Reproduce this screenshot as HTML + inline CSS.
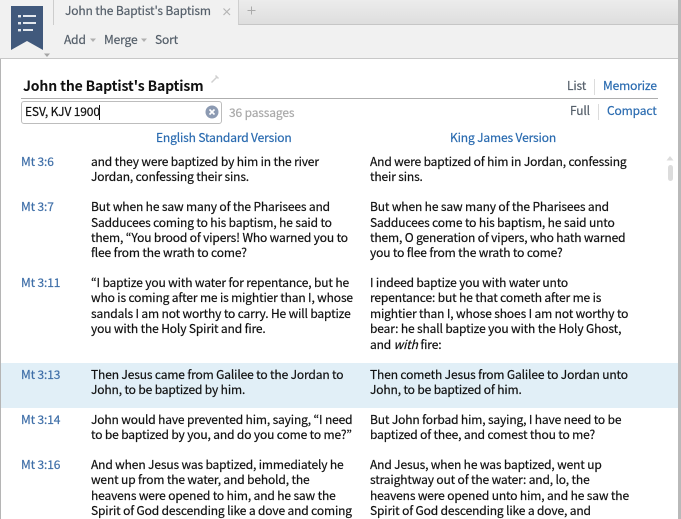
<!DOCTYPE html>
<html><head><meta charset="utf-8">
<style>
html,body{margin:0;padding:0;width:681px;height:519px;overflow:hidden;background:#fff}
body{position:relative;font-family:"Noto Sans CJK JP","Liberation Sans",sans-serif;font-size:12px;letter-spacing:-.14px;color:#111;-webkit-text-stroke:.2px}
.a{position:absolute;white-space:nowrap;line-height:16px}
.r{color:#3f6fa8;left:21px}
.b{color:#2a6bb0}
.g{color:#555f6a}
</style></head>
<body>
<!-- toolbar -->
<div style="position:absolute;left:0;top:0;width:681px;height:58px;background:#f1f1f1;border-bottom:1px solid #c8c8c8"></div>
<div style="position:absolute;left:238px;top:0;width:443px;height:24px;background:linear-gradient(#ececec,#dedede);border-bottom:1px solid #c6c6c6;border-left:1px solid #cfcfcf"></div>
<div style="position:absolute;left:53px;top:0;width:1px;height:25px;background:#cdcdcd"></div>
<svg style="position:absolute;left:0;top:0" width="60" height="60">
<path d="M11 6H43V50L27 41L11 50Z" fill="#41597c"/>
<g fill="#e4e8ee"><rect x="18" y="15" width="3" height="2.4"/><rect x="23" y="15" width="13" height="2"/><rect x="18" y="22" width="3" height="2.4"/><rect x="23" y="22" width="13" height="2"/><rect x="18" y="29" width="3" height="2.4"/><rect x="23" y="29" width="10" height="2"/></g>
<path d="M44 53.500H50L47 57Z" fill="#a5a5a5"/>
</svg>
<div class="a g" style="left:65px;top:3px">John the Baptist's Baptism</div>
<svg style="position:absolute;left:222px;top:7px" width="10" height="10"><path d="M1.500 1.500L8 8M8 1.500L1.500 8" stroke="#b5b5b5" stroke-width="1.200"/></svg>
<svg style="position:absolute;left:246px;top:5px" width="11" height="11"><path d="M5.500 1.500V9.500M1.500 5.500H9.500" stroke="#aaa" stroke-width="1"/></svg>
<div class="a g" style="left:64px;top:32px">Add</div>
<svg style="position:absolute;left:89px;top:38px" width="8" height="5"><path d="M1 0.500H7L4 4Z" fill="#b0b0b0"/></svg>
<div class="a g" style="left:104px;top:32px">Merge</div>
<svg style="position:absolute;left:140px;top:38px" width="8" height="5"><path d="M1 0.500H7L4 4Z" fill="#b0b0b0"/></svg>
<div class="a g" style="left:155px;top:32px">Sort</div>
<div style="position:absolute;left:0;top:59px;width:1px;height:460px;background:#b5b5b5"></div>
<div style="position:absolute;left:678px;top:0;width:3px;height:519px;background:#b9b9b9"></div>
<!-- title -->
<div class="a" style="left:23px;top:78px;font-size:14px;letter-spacing:-.15px;font-weight:700;color:#111;-webkit-text-stroke:0">John the Baptist's Baptism</div>
<svg style="position:absolute;left:210px;top:74px" width="10" height="10"><path d="M1.500 8.500L7 3M5.500 1.500L8.500 4.500" stroke="#d0d0d0" stroke-width="1.500" fill="none"/></svg>
<div class="a g" style="left:567px;top:78px">List</div>
<div style="position:absolute;left:594px;top:79px;width:1px;height:16px;background:#dcdcdc"></div>
<div class="a b" style="left:603px;top:78px">Memorize</div>
<div style="position:absolute;left:21px;top:98px;width:637px;height:1px;background:#aeaeae"></div>
<!-- search -->
<div style="position:absolute;left:21px;top:101px;width:199px;height:21px;border:1px solid #bdbdbd;border-radius:3px;background:#fff"></div>
<div class="a" style="left:25px;top:104px;color:#111">ESV, KJV 1900</div>
<div style="position:absolute;left:99px;top:105px;width:1px;height:15px;background:#111"></div>
<svg style="position:absolute;left:205px;top:105px" width="14" height="14"><circle cx="7" cy="7" r="6.500" fill="#8c9ab2"/><path d="M4.500 4.500L9.500 9.500M9.500 4.500L4.500 9.500" stroke="#fff" stroke-width="1.600"/></svg>
<div class="a" style="left:229px;top:105px;color:#a9a9a9">36 passages</div>
<div class="a g" style="left:570px;top:103px">Full</div>
<div style="position:absolute;left:598px;top:104px;width:1px;height:16px;background:#dcdcdc"></div>
<div class="a b" style="left:607px;top:103px">Compact</div>
<!-- headers -->
<div class="a b" style="left:156px;top:130px">English Standard Version</div>
<div class="a b" style="left:450px;top:130px">King James Version</div>
<!-- scrollbar -->
<svg style="position:absolute;left:666px;top:155px" width="8" height="6"><path d="M0.500 5.500L4 1L7.500 5.500Z" fill="#dcdcdc"/></svg>
<div style="position:absolute;left:668px;top:165px;width:5px;height:16px;border-radius:3px;background:#dcdcdc"></div>
<!-- highlight -->
<div style="position:absolute;left:1px;top:363px;width:677px;height:45px;background:#e1eff7"></div>
<!-- rows -->
<div class="a r" style="top:154px">Mt 3:6</div>
<div class="a" style="left:91px;top:154px">and they were baptized by him in the river</div>
<div class="a" style="left:91px;top:169px">Jordan, confessing their sins.</div>
<div class="a" style="left:370px;top:154px">And were baptized of him in Jordan, confessing</div>
<div class="a" style="left:370px;top:169px">their sins.</div>

<div class="a r" style="top:199px">Mt 3:7</div>
<div class="a" style="left:91px;top:199px">But when he saw many of the Pharisees and</div>
<div class="a" style="left:91px;top:215px">Sadducees coming to his baptism, he said to</div>
<div class="a" style="left:91px;top:230px">them, “You brood of vipers! Who warned you to</div>
<div class="a" style="left:91px;top:245px">flee from the wrath to come?</div>
<div class="a" style="left:370px;top:199px">But when he saw many of the Pharisees and</div>
<div class="a" style="left:370px;top:215px">Sadducees come to his baptism, he said unto</div>
<div class="a" style="left:370px;top:230px">them, O generation of vipers, who hath warned</div>
<div class="a" style="left:370px;top:245px">you to flee from the wrath to come?</div>

<div class="a r" style="top:275px">Mt 3:11</div>
<div class="a" style="left:91px;top:275px">“I baptize you with water for repentance, but he</div>
<div class="a" style="left:91px;top:290px">who is coming after me is mightier than I, whose</div>
<div class="a" style="left:91px;top:306px">sandals I am not worthy to carry. He will baptize</div>
<div class="a" style="left:91px;top:321px">you with the Holy Spirit and fire.</div>
<div class="a" style="left:370px;top:275px">I indeed baptize you with water unto</div>
<div class="a" style="left:370px;top:290px">repentance: but he that cometh after me is</div>
<div class="a" style="left:370px;top:306px">mightier than I, whose shoes I am not worthy to</div>
<div class="a" style="left:370px;top:321px">bear: he shall baptize you with the Holy Ghost,</div>
<div class="a" style="left:370px;top:337px">and <i>with</i> fire:</div>

<div class="a r" style="top:367px">Mt 3:13</div>
<div class="a" style="left:91px;top:367px">Then Jesus came from Galilee to the Jordan to</div>
<div class="a" style="left:91px;top:382px">John, to be baptized by him.</div>
<div class="a" style="left:370px;top:367px">Then cometh Jesus from Galilee to Jordan unto</div>
<div class="a" style="left:370px;top:382px">John, to be baptized of him.</div>

<div class="a r" style="top:412px">Mt 3:14</div>
<div class="a" style="left:91px;top:412px">John would have prevented him, saying, “I need</div>
<div class="a" style="left:91px;top:427px">to be baptized by you, and do you come to me?”</div>
<div class="a" style="left:370px;top:412px">But John forbad him, saying, I have need to be</div>
<div class="a" style="left:370px;top:427px">baptized of thee, and comest thou to me?</div>

<div class="a r" style="top:457px">Mt 3:16</div>
<div class="a" style="left:91px;top:457px">And when Jesus was baptized, immediately he</div>
<div class="a" style="left:91px;top:472px">went up from the water, and behold, the</div>
<div class="a" style="left:91px;top:488px">heavens were opened to him, and he saw the</div>
<div class="a" style="left:91px;top:503px">Spirit of God descending like a dove and coming</div>
<div class="a" style="left:370px;top:457px">And Jesus, when he was baptized, went up</div>
<div class="a" style="left:370px;top:472px">straightway out of the water: and, lo, the</div>
<div class="a" style="left:370px;top:488px">heavens were opened unto him, and he saw the</div>
<div class="a" style="left:370px;top:503px">Spirit of God descending like a dove, and</div>
</body></html>
